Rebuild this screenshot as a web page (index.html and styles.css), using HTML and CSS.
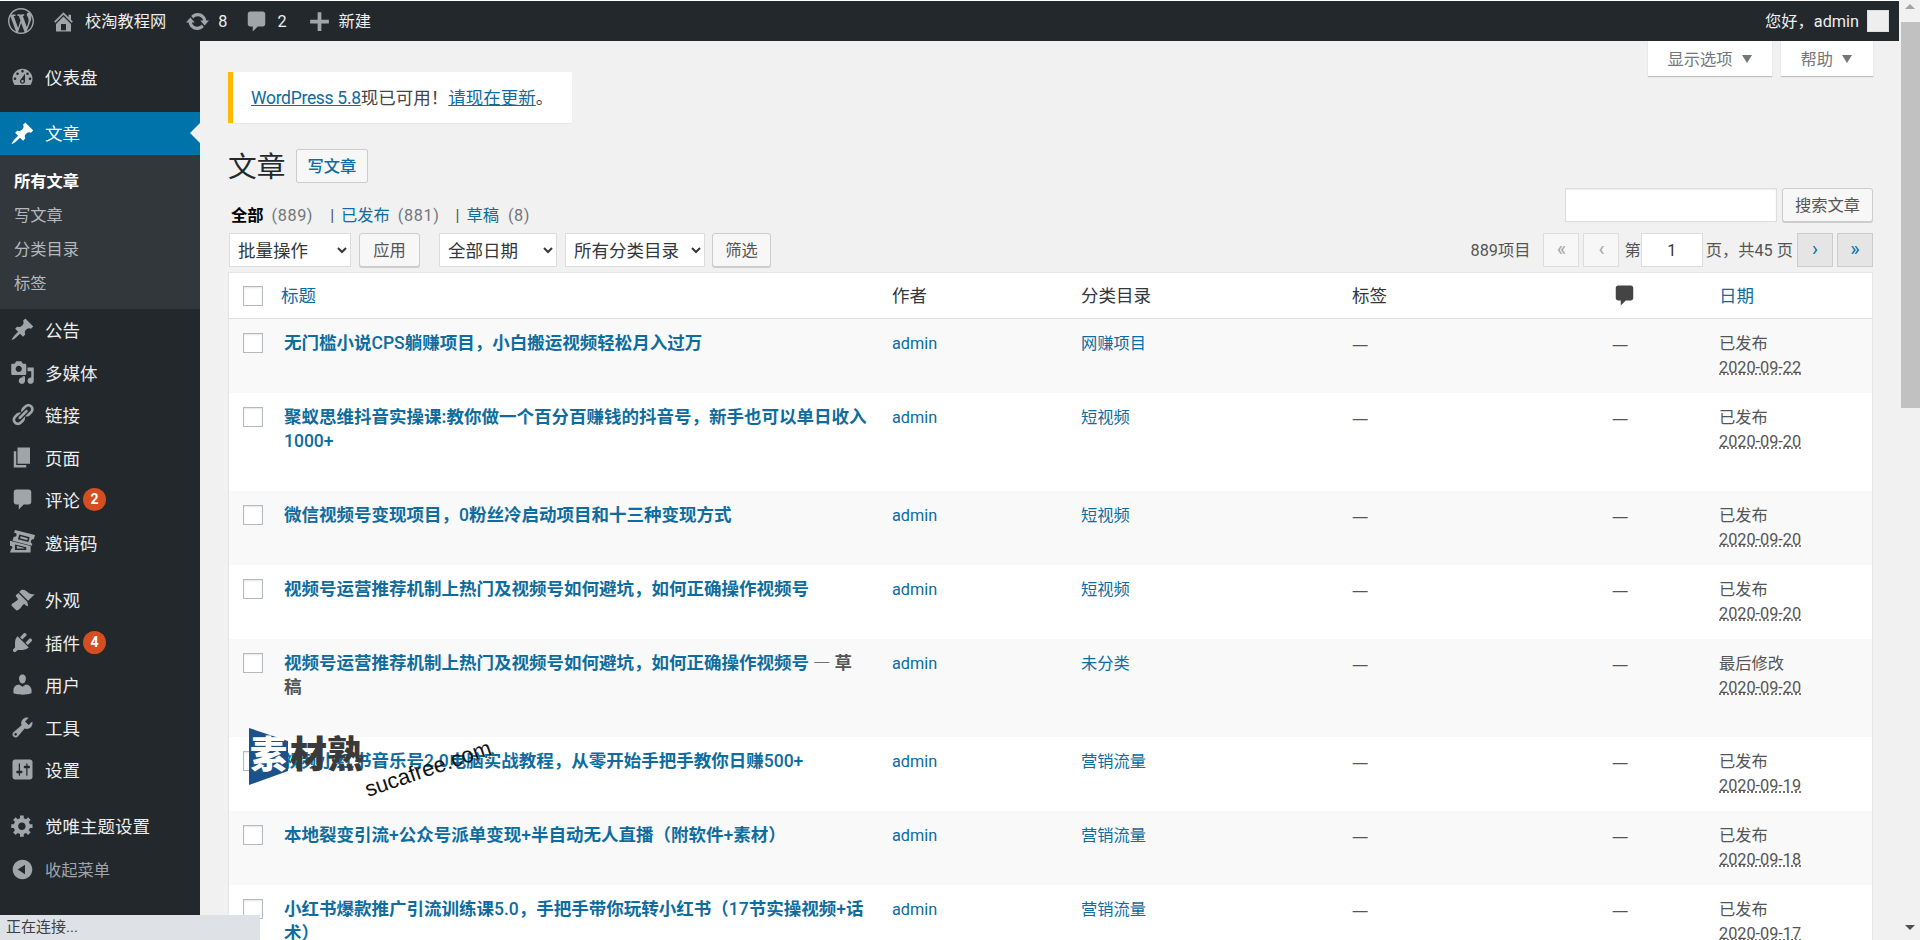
FILE: index.html
```html
<!DOCTYPE html>
<html lang="zh-CN">
<head>
<meta charset="UTF-8">
<title>文章 - 校淘教程网</title>
<link rel="stylesheet" href="styles.css">
</head>
<body>
<svg class="defs" width="0" height="0">
    <symbol id="i-wp" viewBox="0 0 20 20"><path d="M20 10c0-5.51-4.49-10-10-10C4.48 0 0 4.49 0 10c0 5.52 4.48 10 10 10 5.51 0 10-4.48 10-10zM7.78 15.37L4.37 6.22c.55-.02 1.17-.08 1.17-.08.5-.06.44-1.13-.06-1.11 0 0-1.45.11-2.37.11-.18 0-.37 0-.58-.01C4.12 2.69 6.87 1.11 10 1.11c2.33 0 4.45.87 6.05 2.34-.68-.11-1.65.39-1.65 1.58 0 .74.45 1.36.9 2.1.35.61.55 1.36.55 2.46 0 1.49-1.4 5-1.4 5l-3.03-8.37c.54-.02.82-.17.82-.17.5-.05.44-1.25-.06-1.22 0 0-1.44.12-2.38.12-.87 0-2.33-.12-2.33-.12-.5-.03-.56 1.2-.06 1.22l.92.08 1.26 3.41zM17.41 10c.24-.64.74-1.87.43-4.25.7 1.29 1.05 2.71 1.05 4.25 0 3.29-1.73 6.24-4.4 7.78.97-2.59 1.94-5.2 2.92-7.78zM6.1 18.09C3.12 16.65 1.11 13.53 1.11 10c0-1.3.23-2.48.72-3.59C3.25 10.3 4.67 14.2 6.1 18.09zm4.03-6.63l2.58 6.98c-.86.29-1.76.45-2.71.45-.79 0-1.57-.11-2.29-.33.81-2.38 1.62-4.74 2.42-7.1z"/></symbol>
    <symbol id="i-home" viewBox="0 0 20 20"><path d="M16 8.5l1.53 1.53-1.06 1.06L10 4.62l-6.47 6.47-1.06-1.06L10 2.5l4 4v-2h2v4zm-6-2.46l6 5.99V18H4v-5.97zM12 17v-5H8v5h4z"/></symbol>
    <symbol id="i-update" viewBox="0 0 20 20"><path d="M10.2 3.28c3.53 0 6.43 2.61 6.92 6h2.08l-3.5 4-3.5-4h2.32c-.45-1.97-2.21-3.45-4.32-3.45-1.45 0-2.73.71-3.54 1.78L4.95 5.66C6.23 4.2 8.11 3.28 10.2 3.28zm-.4 13.44c-3.52 0-6.43-2.61-6.92-6H.8l3.5-4c1.17 1.33 2.33 2.67 3.5 4H5.48c.45 1.97 2.21 3.45 4.32 3.45 1.45 0 2.73-.71 3.54-1.78l1.71 1.95c-1.28 1.46-3.15 2.38-5.25 2.38z"/></symbol>
    <symbol id="i-comment" viewBox="0 0 20 20"><path d="M5 2h10c1.1 0 2 .9 2 2v8c0 1.1-.9 2-2 2h-4l-4 4v-4H5c-1.1 0-2-.9-2-2V4c0-1.1.9-2 2-2z"/></symbol>
    <symbol id="i-plus" viewBox="0 0 20 20"><path d="M17.5 8.5v3h-6v6h-3v-6h-6v-3h6v-6h3v6z"/></symbol>
    <symbol id="i-dashboard" viewBox="0 0 20 20"><path d="M3.76 16h12.48c1.1-1.37 1.76-3.11 1.76-5 0-4.42-3.58-8-8-8s-8 3.58-8 8c0 1.89.66 3.63 1.76 5zM10 4c.55 0 1 .45 1 1s-.45 1-1 1-1-.45-1-1 .45-1 1-1zM6 6c.55 0 1 .45 1 1s-.45 1-1 1-1-.45-1-1 .45-1 1-1zm8 0c.55 0 1 .45 1 1s-.45 1-1 1-1-.45-1-1 .45-1 1-1zm-5.37 5.55L12 7v6c0 1.1-.9 2-2 2s-2-.9-2-2c0-.57.24-1.08.63-1.45zM4 10c.55 0 1 .45 1 1s-.45 1-1 1-1-.45-1-1 .45-1 1-1zm12 0c.55 0 1 .45 1 1s-.45 1-1 1-1-.45-1-1 .45-1 1-1zm-5 3c0-.55-.45-1-1-1s-1 .45-1 1 .45 1 1 1 1-.45 1-1z"/></symbol>
    <symbol id="i-pin" viewBox="0 0 20 20"><path d="M10.44 3.02l1.82-1.82 6.36 6.35-1.83 1.82c-1.05-.68-2.48-.57-3.41.36l-.75.75c-.92.93-1.04 2.35-.35 3.41l-1.83 1.82-2.41-2.41-2.8 2.79c-.42.42-3.38 2.71-3.8 2.29s1.86-3.39 2.28-3.81l2.79-2.79L4.1 9.36l1.83-1.82c1.05.69 2.48.57 3.4-.36l.75-.75c.93-.92 1.05-2.35.36-3.41z"/></symbol>
    <symbol id="i-media" viewBox="0 0 20 20"><path d="M13 11V4c0-.55-.45-1-1-1h-1.67L9 1H5L3.67 3H2c-.55 0-1 .45-1 1v7c0 .55.45 1 1 1h10c.55 0 1-.45 1-1zM7 4.5c1.38 0 2.5 1.12 2.5 2.5S8.38 9.5 7 9.5 4.5 8.38 4.5 7 5.62 4.5 7 4.5zM14 6h5v10.5c0 1.38-1.12 2.5-2.5 2.5S14 17.88 14 16.5s1.12-2.5 2.5-2.5c.17 0 .34.02.5.05V9h-3V6zm-4 8.05V13h2v3.5c0 1.38-1.12 2.5-2.5 2.5S7 17.88 7 16.5 8.12 14 9.5 14c.17 0 .34.02.5.05z"/></symbol>
    <symbol id="i-links" viewBox="0 0 20 20"><path d="M17.74 2.76c1.68 1.69 1.68 4.41 0 6.1l-1.53 1.52c-1.12 1.12-2.7 1.47-4.14 1.09l2.62-2.61.76-.77.76-.76c.84-.84.84-2.2 0-3.04-.84-.85-2.2-.85-3.04 0l-.77.76-3.38 3.38c-.37-1.44-.02-3.02 1.1-4.14l1.52-1.53c1.69-1.68 4.42-1.68 6.1 0zM8.59 13.43l5.34-5.34c.42-.42.42-1.1 0-1.52-.44-.43-1.13-.39-1.53 0l-5.33 5.34c-.42.42-.42 1.1 0 1.52.44.43 1.13.39 1.52 0zm-.76 2.29l4.14-4.15c.38 1.44.03 3.02-1.09 4.14l-1.52 1.53c-1.69 1.68-4.41 1.68-6.1 0-1.68-1.68-1.68-4.42 0-6.1l1.53-1.52c1.12-1.12 2.7-1.47 4.14-1.1l-4.14 4.15c-.85.84-.85 2.2 0 3.05.84.84 2.2.84 3.04 0z"/></symbol>
    <symbol id="i-page" viewBox="0 0 20 20"><path d="M6 15V2h10v13H6zm-1 1h8v2H3V5h2v11z"/></symbol>
    <symbol id="i-tickets" viewBox="0 0 20 20"><path fill-rule="evenodd" d="M4 0l16 4-1 3.500c-1-.3-2 .2-2.300 1.200s.2 1.900 1.200 2.200l-.5 1.600L2 8.500l1-3.200c1 .3 1.900-.2 2.200-1.200S5 2.300 3.200 2zM7.500 3.500L6.300 7.300l8.400 2.200 1-3.800zM8.500 5l5.700 1.500-.5 1.600L8 6.600z"/><path fill-rule="evenodd" d="M0 8.500l16.500 4.300V18H0l1-3c.6 0 1-.5 1-1.200s-.8-1.300-2-1.300zM4 11.500V16h9v-2.300zM5.500 12.800l6 1.500v.5h-6z"/></symbol>
    <symbol id="i-brush" viewBox="0 0 20 20"><path d="M14.480 11.060L7.410 3.990l1.500-1.500c.5-.56 2.300-.47 3.510.32 1.210.8 1.430 1.280 2.910 2.100 1.180.64 2.450 1.260 4.450.85zm-.71.71L6.700 4.700 4.930 6.470c-.39.39-.39 1.020 0 1.410l1.060 1.060c.39.39.39 1.030 0 1.420-.6.6-1.430 1.110-2.210 1.690-.35.26-.7.53-1.010.84C1.430 13.230.91 14.660 1.310 15.060l3.630 3.630c.4.4 1.830-.12 3.160-1.470.31-.31.58-.66.84-1.010.58-.78 1.090-1.610 1.690-2.210.39-.39 1.030-.39 1.420 0l1.060 1.060c.39.39 1.020.39 1.410 0z"/></symbol>
    <symbol id="i-plug" viewBox="0 0 20 20"><path d="M13.110 4.360L9.870 7.600 8 5.730l3.240-3.240c.35-.34 1.050-.2 1.560.32.52.51.66 1.210.31 1.550zm-8 1.770l.91-1.120 9.010 9.010-1.190.84c-.71.71-2.630 1.160-3.820 1.160H6.140L4.900 17.260c-.59.59-1.540.59-2.120 0-.59-.58-.59-1.530 0-2.120l1.240-1.240v-3.880c0-1.130.4-3.190 1.090-3.890zm7.260 3.970l3.240-3.240c.34-.35 1.040-.2 1.550.31.52.52.66 1.220.32 1.570l-3.240 3.240z"/></symbol>
    <symbol id="i-user" viewBox="0 0 20 20"><path d="M10 9.250c-2.270 0-2.730-3.440-2.730-3.440C7 4.020 7.820 2 9.970 2c2.160 0 2.980 2.020 2.710 3.810 0 0-.41 3.440-2.680 3.440zm0 2.570L12.720 10c2.390 0 4.520 2.330 4.520 4.530v2.490s-3.650 1.130-7.240 1.130c-3.650 0-7.240-1.130-7.240-1.130v-2.490c0-2.250 1.940-4.480 4.470-4.480z"/></symbol>
    <symbol id="i-tools" viewBox="0 0 20 20"><path d="M16.680 9.770c-1.340 1.340-3.300 1.670-4.950.99l-5.410 6.520c-.99.99-2.590.99-3.580 0s-.99-2.590 0-3.570l6.520-5.420c-.68-1.650-.35-3.610.99-4.950 1.280-1.280 3.120-1.620 4.720-1.060l-2.890 2.890 2.820 2.820 2.860-2.870c.53 1.580.18 3.390-1.080 4.650zM3.810 16.210c.4.390 1.040.39 1.430 0 .4-.4.4-1.040 0-1.430-.39-.4-1.030-.4-1.430 0-.39.39-.39 1.030 0 1.430z"/></symbol>
    <symbol id="i-settings" viewBox="0 0 20 20"><path d="M18 16V4c0-1.100-.9-2-2-2H4c-1.100 0-2 .9-2 2v12c0 1.100.9 2 2 2h12c1.100 0 2-.9 2-2zM8 11h1c.55 0 1 .45 1 1s-.45 1-1 1H8v1.500c0 .28-.22.5-.5.5s-.5-.22-.5-.5V13H6c-.55 0-1-.45-1-1s.45-1 1-1h1V5.500c0-.28.22-.5.5-.5s.5.22.5.5V11zm5-2h-1c-.55 0-1-.45-1-1s.45-1 1-1h1V5.500c0-.28.22-.5.5-.5s.5.22.5.5V7h1c.55 0 1 .45 1 1s-.45 1-1 1h-1v5.500c0 .28-.22.5-.5.5s-.5-.22-.5-.5V9z"/></symbol>
    <symbol id="i-gear" viewBox="0 0 20 20"><path d="M18 12h-2.180c-.17.7-.44 1.350-.81 1.930l1.540 1.540-2.100 2.100-1.540-1.540c-.58.36-1.230.63-1.910.79V19H8v-2.180c-.68-.16-1.330-.43-1.910-.79l-1.540 1.540-2.120-2.120 1.540-1.540c-.36-.58-.63-1.230-.79-1.910H1V9.030h2.170c.16-.7.44-1.350.8-1.940L2.430 5.550l2.100-2.100 1.540 1.540c.58-.37 1.240-.64 1.930-.81V2h3v2.180c.68.16 1.330.43 1.910.79l1.540-1.540 2.120 2.120-1.540 1.540c.36.59.64 1.240.8 1.940H18V12zm-8.500 1.500c1.660 0 3-1.340 3-3s-1.340-3-3-3-3 1.340-3 3 1.340 3 3 3z"/></symbol>
    <symbol id="i-collapse" viewBox="0 0 20 20"><path d="M10 2.160c4.330 0 7.840 3.510 7.840 7.840s-3.510 7.840-7.840 7.840S2.160 14.330 2.160 10 5.710 2.160 10 2.160zm2 11.720V6.120L6.180 9.970z"/></symbol>
</svg>

<div class="page">
    <div class="viewport">
        <header class="adminbar">
            <svg class="bar-logo"><use href="#i-wp"/></svg>
            <a class="bar-item bar-home"><svg class="bar-icon"><use href="#i-home"/></svg>校淘教程网</a>
            <a class="bar-item bar-updates"><svg class="bar-icon"><use href="#i-update"/></svg>8</a>
            <a class="bar-item bar-comments"><svg class="bar-icon"><use href="#i-comment"/></svg>2</a>
            <a class="bar-item bar-new"><svg class="bar-icon"><use href="#i-plus"/></svg>新建</a>
            <a class="bar-user">您好，admin<span class="avatar"></span></a>
        </header>

        <div class="layout">
            <aside class="sidebar">
                <ul class="menu menu-top">
                    <li class="menu-item"><svg class="menu-icon"><use href="#i-dashboard"/></svg>仪表盘</li>
                    <li class="menu-item menu-active gap"><svg class="menu-icon"><use href="#i-pin"/></svg>文章</li>
                </ul>
                <ul class="submenu">
                    <li class="current">所有文章</li>
                    <li>写文章</li>
                    <li>分类目录</li>
                    <li>标签</li>
                </ul>
                <ul class="menu">
                    <li class="menu-item"><svg class="menu-icon"><use href="#i-pin"/></svg>公告</li>
                    <li class="menu-item"><svg class="menu-icon"><use href="#i-media"/></svg>多媒体</li>
                    <li class="menu-item"><svg class="menu-icon"><use href="#i-links"/></svg>链接</li>
                    <li class="menu-item"><svg class="menu-icon"><use href="#i-page"/></svg>页面</li>
                    <li class="menu-item"><svg class="menu-icon"><use href="#i-comment"/></svg>评论<span class="badge">2</span></li>
                    <li class="menu-item"><svg class="menu-icon"><use href="#i-tickets"/></svg>邀请码</li>
                    <li class="menu-item gap-wide"><svg class="menu-icon"><use href="#i-brush"/></svg>外观</li>
                    <li class="menu-item"><svg class="menu-icon"><use href="#i-plug"/></svg>插件<span class="badge">4</span></li>
                    <li class="menu-item"><svg class="menu-icon"><use href="#i-user"/></svg>用户</li>
                    <li class="menu-item"><svg class="menu-icon"><use href="#i-tools"/></svg>工具</li>
                    <li class="menu-item"><svg class="menu-icon"><use href="#i-settings"/></svg>设置</li>
                    <li class="menu-item gap"><svg class="menu-icon"><use href="#i-gear"/></svg>觉唯主题设置</li>
                    <li class="menu-item menu-collapse"><svg class="menu-icon"><use href="#i-collapse"/></svg>收起菜单</li>
                </ul>
            </aside>

            <main class="content">
                <div class="screen-tabs">
                    <a class="screen-tab">显示选项</a>
                    <a class="screen-tab tab-help">帮助</a>
                </div>

                <div class="notice"><a class="notice-wp">WordPress 5.8</a>现已可用！<a>请现在更新</a>。</div>

                <div class="heading">
                    <h1>文章</h1>
                    <a class="add-new">写文章</a>
                </div>

                <div class="filter-row">
                    <ul class="subsub">
                        <li class="sub-all"><b>全部</b><span class="count">(889)</span></li>
                        <li><i class="sep">|</i><a>已发布</a><span class="count">(881)</span></li>
                        <li><i class="sep">|</i><a>草稿</a><span class="count">(8)</span></li>
                    </ul>
                    <div class="search">
                        <input class="search-input" type="text">
                        <button class="btn search-btn">搜索文章</button>
                    </div>
                </div>

                <div class="tablenav">
                    <select class="sel sel-bulk"><option>批量操作</option></select>
                    <button class="btn btn-apply">应用</button>
                    <select class="sel sel-date"><option>全部日期</option></select>
                    <select class="sel sel-cat"><option>所有分类目录</option></select>
                    <button class="btn btn-filter">筛选</button>
                    <div class="pages">
                        <span class="total">889项目</span>
                        <span class="pg off">«</span>
                        <span class="pg off">‹</span>
                        <span class="pg-label">第</span>
                        <input class="pg-input" type="text" value="1">
                        <span class="pg-of">页，共45 页</span>
                        <a class="pg">›</a>
                        <a class="pg">»</a>
                    </div>
                </div>

                <table class="posts">
                    <colgroup>
                        <col class="c-cb"><col class="c-title"><col class="c-author"><col class="c-cat"><col class="c-tags"><col class="c-comm"><col class="c-date">
                    </colgroup>
                    <thead>
                        <tr>
                            <th class="cb-cell"><input class="cb" type="checkbox"></th>
                            <th><a>标题</a></th>
                            <th>作者</th>
                            <th>分类目录</th>
                            <th>标签</th>
                            <th><svg class="th-comment"><use href="#i-comment"/></svg></th>
                            <th><a>日期</a></th>
                        </tr>
                    </thead>
                    <tbody>
                        <tr>
                            <td class="cb-cell"><input class="cb" type="checkbox"></td>
                            <td class="title"><a>无门槛小说<span class="lat">CPS</span>躺赚项目，小白搬运视频轻松月入过万</a></td>
                            <td><a>admin</a></td><td><a>网赚项目</a></td><td class="dash">—</td><td class="dash">—</td>
                            <td>已发布<br><abbr>2020-09-22</abbr></td>
                        </tr>
                        <tr>
                            <td class="cb-cell"><input class="cb" type="checkbox"></td>
                            <td class="title"><a>聚蚁思维抖音实操课:教你做一个百分百赚钱的抖音号，新手也可以单日收入<span class="lat">1000+</span></a></td>
                            <td><a>admin</a></td><td><a>短视频</a></td><td class="dash">—</td><td class="dash">—</td>
                            <td>已发布<br><abbr>2020-09-20</abbr></td>
                        </tr>
                        <tr>
                            <td class="cb-cell"><input class="cb" type="checkbox"></td>
                            <td class="title"><a>微信视频号变现项目，<span class="lat">0</span>粉丝冷启动项目和十三种变现方式</a></td>
                            <td><a>admin</a></td><td><a>短视频</a></td><td class="dash">—</td><td class="dash">—</td>
                            <td>已发布<br><abbr>2020-09-20</abbr></td>
                        </tr>
                        <tr>
                            <td class="cb-cell"><input class="cb" type="checkbox"></td>
                            <td class="title"><a>视频号运营推荐机制上热门及视频号如何避坑，如何正确操作视频号</a></td>
                            <td><a>admin</a></td><td><a>短视频</a></td><td class="dash">—</td><td class="dash">—</td>
                            <td>已发布<br><abbr>2020-09-20</abbr></td>
                        </tr>
                        <tr>
                            <td class="cb-cell"><input class="cb" type="checkbox"></td>
                            <td class="title"><a>视频号运营推荐机制上热门及视频号如何避坑，如何正确操作视频号</a><span class="state"> — 草稿</span></td>
                            <td><a>admin</a></td><td><a>未分类</a></td><td class="dash">—</td><td class="dash">—</td>
                            <td>最后修改<br><abbr>2020-09-20</abbr></td>
                        </tr>
                        <tr>
                            <td class="cb-cell"><input class="cb" type="checkbox"></td>
                            <td class="title"><a>视频小红书音乐号<span class="lat">2.0</span>电脑实战教程，从零开始手把手教你日赚<span class="lat">500+</span></a></td>
                            <td><a>admin</a></td><td><a>营销流量</a></td><td class="dash">—</td><td class="dash">—</td>
                            <td>已发布<br><abbr>2020-09-19</abbr></td>
                        </tr>
                        <tr>
                            <td class="cb-cell"><input class="cb" type="checkbox"></td>
                            <td class="title"><a>本地裂变引流<span class="lat">+</span>公众号派单变现<span class="lat">+</span>半自动无人直播（附软件<span class="lat">+</span>素材）</a></td>
                            <td><a>admin</a></td><td><a>营销流量</a></td><td class="dash">—</td><td class="dash">—</td>
                            <td>已发布<br><abbr>2020-09-18</abbr></td>
                        </tr>
                        <tr>
                            <td class="cb-cell"><input class="cb" type="checkbox"></td>
                            <td class="title"><a>小红书爆款推广引流训练课<span class="lat">5.0</span>，手把手带你玩转小红书（<span class="lat">17</span>节实操视频<span class="lat">+</span>话术）</a></td>
                            <td><a>admin</a></td><td><a>营销流量</a></td><td class="dash">—</td><td class="dash">—</td>
                            <td>已发布<br><abbr>2020-09-17</abbr></td>
                        </tr>
                    </tbody>
                </table>
            </main>
        </div>
    </div>

    <div class="scrollbar">
        <span class="sb-up"></span>
        <span class="sb-thumb"></span>
        <span class="sb-down"></span>
    </div>

    <div class="watermark">
        <svg class="wm-flag" viewBox="0 0 39 57"><polygon points="0,0 39,13 39,43 0,57"/></svg>
        <span class="wm-su">素</span>
        <span class="wm-name">材熟</span>
        <span class="wm-url">sucafree.com</span>
    </div>

    <div class="status">正在连接...</div>
</div>
</body>
</html>
```

FILE: styles.css
```css
* {
    box-sizing: border-box;
}
body {
    margin: 0;
    overflow: hidden;
    background: #fff;
    color: #444;
    font-family: Roboto, "Noto Sans CJK SC", sans-serif;
    font-size: 16.25px;
    line-height: 24.5px;
}
.defs {
    position: absolute;
}
ul {
    list-style: none;
    margin: 0;
    padding: 0;
}
a {
    color: #0e6c9e;
}

.page {
    position: relative;
    display: flex;
    height: 940px;
    overflow: hidden;
}
.viewport {
    display: flex;
    flex-direction: column;
    width: 1899px;
    padding-top: 1px;
}

/* admin bar */
.adminbar {
    display: flex;
    align-items: center;
    flex: none;
    height: 40px;
    background: #23282d;
    color: #eee;
}
.adminbar a {
    color: #eee;
}
.bar-logo {
    width: 26px;
    height: 26px;
    margin-left: 8px;
    fill: #a0a5aa;
}
.bar-item {
    display: flex;
    align-items: center;
    padding-top: 2px;
}
.bar-icon {
    width: 25px;
    height: 25px;
    margin-top: -2px;
    fill: #a0a5aa;
}
.bar-home {
    margin-left: 17px;
}
.bar-home .bar-icon {
    margin-right: 9px;
}
.bar-updates {
    margin-left: 19px;
}
.bar-updates .bar-icon {
    margin-right: 8px;
}
.bar-comments {
    margin-left: 17px;
}
.bar-comments .bar-icon {
    margin-right: 8px;
}
.bar-new {
    margin-left: 20px;
}
.bar-new .bar-icon {
    margin-right: 7px;
}
.bar-user {
    display: flex;
    align-items: center;
    margin-left: auto;
    margin-right: 10px;
    padding-top: 2px;
}
.avatar {
    width: 22px;
    height: 22px;
    margin-top: -2px;
    margin-left: 8px;
    background: #eee;
    border: 1px solid #ddd;
}

.layout {
    display: flex;
    flex: 1;
    min-height: 0;
}

/* sidebar */
.sidebar {
    flex: none;
    width: 200px;
    padding-top: 15px;
    background: #23282d;
}
.menu-item {
    display: flex;
    align-items: center;
    height: 42.5px;
    padding: 3px 0 0 10px;
    color: #eee;
    font-size: 17.5px;
}
.menu-item.gap {
    margin-top: 13.5px;
}
.menu-item.gap-wide {
    margin-top: 15px;
}
.menu-icon {
    flex: none;
    width: 25px;
    height: 25px;
    margin: -3px 10px 0 0;
    fill: #a0a5aa;
}
.menu-top .menu-item {
    padding-top: 1px;
}
.menu-top .menu-icon {
    margin-top: -1px;
}
.menu-active {
    position: relative;
    background: #0073aa;
    color: #fff;
}
.menu-active .menu-icon {
    fill: #fff;
}
.menu-active::after {
    content: "";
    position: absolute;
    right: 0;
    top: 50%;
    margin-top: -10px;
    border: 10px solid transparent;
    border-right-color: #f1f1f1;
}
.submenu {
    padding: 9px 0;
    background: #32373c;
}
.submenu li {
    height: 34px;
    padding-left: 14px;
    color: #b4b9be;
    line-height: 36px;
}
.submenu .current {
    color: #fff;
    font-weight: 700;
}
.badge {
    width: 23px;
    height: 23px;
    margin-top: -3px;
    margin-left: 3px;
    border-radius: 50%;
    background: #d54e21;
    color: #fff;
    font-size: 14px;
    font-weight: 700;
    line-height: 23px;
    text-align: center;
}
.menu-collapse {
    margin-top: 1px;
    color: #a0a5aa;
    font-size: 16.25px;
}

/* content */
.content {
    flex: 1;
    min-width: 0;
    padding: 0 26px 0 28px;
    overflow: hidden;
    background: #f1f1f1;
}
.screen-tabs {
    display: flex;
    float: right;
    gap: 9px;
}
.screen-tab {
    display: flex;
    align-items: center;
    height: 35px;
    padding: 3px 20px 0;
    background: #fff;
    box-shadow: 0 1px 1px rgba(0, 0, 0, .2);
    color: #72777c;
}
.tab-help {
    padding-right: 21px;
}
.screen-tab::after {
    content: "";
    margin: -3px 0 0 9px;
    border: 5px solid transparent;
    border-top: 8px solid #72777c;
    border-bottom: 0;
}
.notice {
    width: 344px;
    height: 51px;
    margin-top: 31px;
    padding-left: 18px;
    border-left: 5px solid #ffb900;
    background: #fff;
    box-shadow: 0 1px 1px rgba(0, 0, 0, .04);
    font-size: 17.5px;
    line-height: 53px;
    white-space: nowrap;
}
.notice a {
    text-decoration: underline;
}
.notice .notice-wp {
    letter-spacing: -.3px;
}
.heading {
    display: flex;
    align-items: center;
    height: 34px;
    margin-top: 26px;
}
h1 {
    margin: 0 10px 0 0;
    padding-top: 2px;
    color: #23282d;
    font-size: 28.75px;
    font-weight: 400;
}
.add-new {
    height: 34px;
    padding: 0 11px;
    border: 1px solid #ccc;
    border-radius: 2px;
    background: #f7f7f7;
    font-weight: 500;
    line-height: 34px;
}
.filter-row {
    display: flex;
    justify-content: space-between;
    height: 35px;
    margin-top: 5px;
}
.subsub {
    display: flex;
    padding: 16px 0 0 3px;
}
.subsub b {
    color: #000;
}
.count {
    margin-left: 8px;
    color: #72777c;
    letter-spacing: .6px;
}
.subsub li:nth-child(2) {
    margin-left: 17px;
}
.subsub li:nth-child(3) {
    margin-left: 16px;
}
.subsub li:nth-child(3) .count {
    margin-left: 9px;
}
.sep {
    margin-right: 7px;
    color: #555;
    font-style: normal;
}
.search {
    display: flex;
    gap: 5px;
}
.search-input {
    width: 212px;
    height: 34px;
    border: 1px solid #ddd;
    background: #fff;
    box-shadow: inset 0 1px 2px rgba(0, 0, 0, .07);
}
.btn {
    height: 34px;
    padding: 2px 0 0;
    border: 1px solid #ccc;
    border-radius: 3px;
    background: #f7f7f7;
    box-shadow: 0 1px 0 #ccc;
    color: #555;
    font: inherit;
}
.search-btn {
    width: 91px;
}
.tablenav {
    display: flex;
    height: 34px;
    margin-top: 10px;
}
.sel {
    height: 34px;
    padding: 2px 0 0 4px;
    border: 1px solid #ddd;
    background: #fff;
    color: #32373c;
    font: inherit;
    font-size: 17.5px;
}
.sel-bulk {
    width: 122px;
    margin-left: 1px;
}
.btn-apply {
    width: 61px;
    margin: 0 19px 0 8px;
}
.sel-date {
    width: 118px;
}
.sel-cat {
    width: 140px;
    margin-left: 8px;
}
.btn-filter {
    width: 59px;
    margin-left: 7px;
}
.pages {
    display: flex;
    align-items: center;
    margin-left: auto;
    color: #555;
}
.total {
    margin-right: 13px;
    padding-top: 2px;
}
.pg {
    width: 36px;
    height: 34px;
    margin-left: 4px;
    border: 1px solid #ccc;
    background: #e5e5e5;
    color: #0073aa;
    font-size: 20px;
    line-height: 30px;
    text-align: center;
}
.pg.off {
    border-color: #ddd;
    background: #f7f7f7;
    color: #a0a5aa;
}
.total + .pg {
    margin-left: 0;
}
.pg-label {
    margin-left: 5px;
    padding-top: 2px;
}
.pg-input {
    width: 62px;
    height: 34px;
    margin: 0 3px 0 0;
    border: 1px solid #ddd;
    background: #fff;
    color: #32373c;
    font: inherit;
    text-align: center;
}
.pg-of {
    padding-top: 2px;
}

/* posts table */
.posts {
    width: 100%;
    margin-top: 5px;
    border: 1px solid #e5e5e5;
    border-spacing: 0;
    table-layout: fixed;
    background: #fff;
    box-shadow: 0 1px 1px rgba(0, 0, 0, .04);
}
.c-cb { width: 42px; }
.c-title { width: 611px; }
.c-author { width: 189px; }
.c-cat { width: 271px; }
.c-tags { width: 260px; }
.c-comm { width: 107px; }
.c-date { width: 163px; }
.posts th {
    height: 46px;
    padding: 2px 10px 0;
    border-bottom: 1px solid #e1e1e1;
    color: #32373c;
    font-size: 17.5px;
    font-weight: 400;
    text-align: left;
}
.posts td {
    padding: 13px 10px 0;
    color: #555;
    line-height: 24px;
    vertical-align: top;
}
.posts .dash {
    font-family: "Noto Sans", sans-serif;
}
.posts tbody tr:nth-child(odd) {
    background: #f9f9f9;
}
.posts .title {
    padding: 12px 13px 38px 13px;
    font-size: 17.5px;
    font-weight: 700;
}
.lat {
    font-weight: 500;
}
.state {
    color: #555;
    font-family: "Noto Sans CJK SC", sans-serif;
    line-height: 1;
}
.posts .cb-cell {
    padding: 0 0 0 14px;
}
.posts td.cb-cell {
    padding-top: 14px;
}
.cb {
    display: block;
    width: 20px;
    height: 20px;
    margin: 0;
    appearance: none;
    border: 1px solid #b4b9be;
    background: #fff;
    box-shadow: inset 0 1px 2px rgba(0, 0, 0, .1);
}
.th-comment {
    display: block;
    width: 25px;
    height: 25px;
    margin-top: -2px;
    fill: #444;
}
abbr {
    text-decoration: underline dotted;
}

/* fake browser scrollbar */
.scrollbar {
    display: flex;
    flex-direction: column;
    align-items: stretch;
    width: 21px;
    padding-left: 2px;
    background: #f1f1f1;
}
.sb-up {
    position: relative;
    height: 22px;
}
.sb-up::after, .sb-down::after {
    content: "";
    position: absolute;
    left: 4px;
    border: 5px solid transparent;
}
.sb-up::after {
    top: 4px;
    border-top: 0;
    border-bottom-color: #a3a3a3;
}
.sb-thumb {
    height: 386px;
    background: #c1c1c1;
}
.sb-down {
    position: relative;
    height: 22px;
    margin-top: auto;
}
.sb-down::after {
    top: 7px;
    border-bottom: 0;
    border-top-color: #505050;
}

/* overlays */
.watermark {
    position: absolute;
    left: 249px;
    top: 728px;
    width: 250px;
    height: 70px;
}
.wm-flag {
    position: absolute;
    left: 0;
    top: 0;
    width: 39px;
    height: 57px;
    fill: #1c5189;
}
.wm-su {
    position: absolute;
    left: 1px;
    top: 8px;
    color: #fff;
    font-size: 37px;
    font-weight: 900;
    line-height: 40px;
}
.wm-name {
    position: absolute;
    left: 41px;
    top: 8px;
    color: #3a3a3a;
    font-size: 37px;
    font-weight: 900;
    line-height: 40px;
}
.wm-url {
    position: absolute;
    left: 113px;
    top: 29px;
    color: #111;
    font-family: "Liberation Sans", sans-serif;
    font-size: 22px;
    line-height: 24px;
    transform: rotate(-19deg);
    white-space: nowrap;
}
.status {
    position: absolute;
    left: 0;
    bottom: 0;
    width: 260px;
    height: 25px;
    padding-left: 6px;
    background: #dee1e6;
    color: #3c4043;
    font-size: 15px;
    line-height: 25px;
}
```
